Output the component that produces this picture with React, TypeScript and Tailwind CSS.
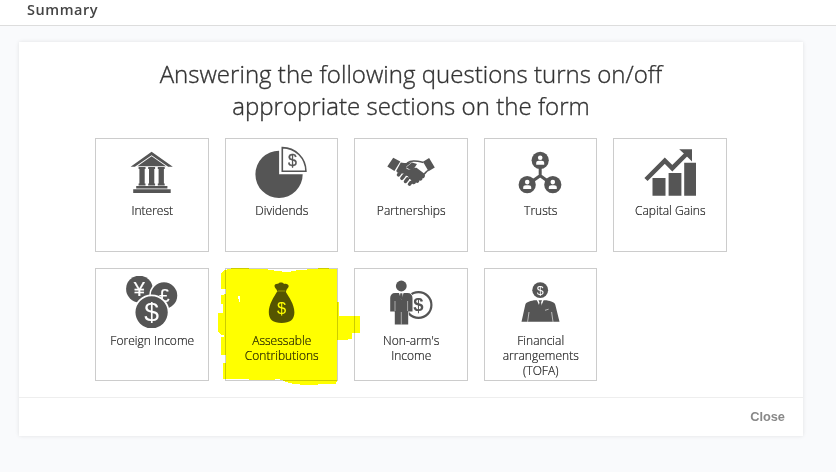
import type { ReactNode } from "react";

type Tile = {
  label: string;
  icon: ReactNode;
  highlighted?: boolean;
};

const Icon = ({ children }: { children: ReactNode }) => (
  <svg viewBox="0 0 52 52" className="block h-[52px] w-[52px] shrink-0" fill="#555555">
    {children}
  </svg>
);

const Symbol = ({ x, y, size, fill = "#fff", bold = false, children }: { x: number; y: number; size: number; fill?: string; bold?: boolean; children: ReactNode }) => (
  <text x={x} y={y} fontSize={size} fill={fill} textAnchor="middle" fontWeight={bold ? 700 : 400} fontFamily="Liberation Sans, sans-serif">
    {children}
  </text>
);

const BankIcon = () => (
  <Icon>
    <path d="M25.6 5.7 46.8 20.8h-4.6L25.6 9.2 8.9 20.8H4.6z" />
    <path d="M25.6 10.3 40 20.3H11.4z" />
    {[12.6, 22.2, 31.8].map((x) => (
      <path key={x} d={`M${x} 21h6.9v1.9h-.8v14.7h.8v1.9h-6.9v-1.9h.8V22.9h-.8z`} />
    ))}
    <path d="M10.2 40.1h31.2v2.3H10.2zM7.2 43.2h37.5v3.8H7.2z" />
  </Icon>
);

const PieIcon = () => (
  <Icon>
    <path d="M24.1 4.7A23.65 23.65 0 1 0 47.7 28.3H24.1z" />
    <path d="M27.3 1.6v23.600h23.600A23.600 23.600 0 0 0 27.3 1.6z" fill="#fff" stroke="#555555" strokeWidth="1.6" />
    <g stroke="#555555" strokeWidth=".3">
      <Symbol x={37.4} y={20} size={16} fill="#555555">$</Symbol>
    </g>
  </Icon>
);

const HandshakeIcon = () => (
  <Icon>
    <path d="M8.2 11.8 15.3 15.6 9.4 25 2.3 20.4zM38 15.8 44.1 12.1 49.8 21.4 43.5 25.3z" />
    <path d="M15.800 16.6c2.800.8 5.200.4 8.400-.2l3-.4-5.200 4c-1.500 1.500-.5 3.600 2 3.400 3-.2 5-2 7.500-1.700l7.300 5.600c1.200 1 1.600 2.400.8 3.700-.4 1-1.300 1.400-2.100 1.200.2 1.700-1.300 3-3.100 2.400-.1 1.900-1.700 2.900-3.500 2-.4 1.700-2.200 2.200-3.600 1.200l-1.500-1c1.300-2.200 0-4.100-2.200-3.900.3-2.200-1.300-3.600-3.300-3-.1-2-1.900-3.100-3.700-2.200-.8-1.500-2.600-2-4-.9l-1.400-1.800z" />
    <path d="M21 21.500 27 16.500l5 1.500-3 4.500-3 1.500z" />
    <path d="M22 17c4-2.700 8-2.500 16.500-.6M43 24.400c-1.500 1-2.400 2.300-4 3.800" fill="none" stroke="#555555" strokeWidth="1.5" />
    <g stroke="#555555" strokeWidth="3.500" strokeLinecap="round">
      <path d="m13.500 28.800 1.500-1.900M16.900 32.300l2.100-2.700M20.500 35.500l2-2.600M24.500 38.200l1.300-1.700" />
    </g>
  </Icon>
);

const TrustsIcon = () => (
  <Icon>
    <path d="M26.2 15v15M13.2 38.7l13-9 12.6 9" fill="none" stroke="#555555" strokeWidth="3" />
    {[[26.2, 14.3], [13.2, 38.7], [38.8, 38.7]].map(([x, y]) => (
      <g key={x} transform={`translate(${x} ${y})`}>
        <circle r="8.6" />
        <circle cy="-2.6" r="2.3" fill="#fff" />
        <path d="M-4 4.4V2.8c0-1.6 1-2.3 2.6-2.3h2.8C3 .5 4 1.2 4 2.8v1.6z" fill="#fff" />
      </g>
    ))}
  </Icon>
);

const GainsIcon = () => (
  <Icon>
    <path d="M8.5 32h13v17.7h-13zM24.6 27h12.8v22.7H24.6zM40.2 16.7H52v33H40.2z" />
    <path d="m2 33.5 18.8-18.8 7.5 7.5L43 7.5" fill="none" stroke="#555555" strokeWidth="4.5" />
    <path d="M35.2 3.2H48V15.5l-3-3-6.5-6.3z" />
  </Icon>
);

const CurrencyIcon = () => (
  <Icon>
    <circle cx="13.4" cy="13" r="13.3" />
    <g stroke="#fff" strokeWidth=".2">
      <Symbol x={13.4} y={20} size={20}>¥</Symbol>
    </g>
    <circle cx="38" cy="19.5" r="14" stroke="#fff" strokeWidth="1.5" />
    <g stroke="#fff" strokeWidth=".2">
      <Symbol x={38.3} y={26} size={19}>£</Symbol>
    </g>
    <circle cx="25.6" cy="36.3" r="17" stroke="#fff" strokeWidth="1.7" />
    <Symbol x={25.6} y={45.4} size={26.5}>$</Symbol>
  </Icon>
);

const MoneyBagIcon = () => (
  <Icon>
    <path d="M22 14.5c-.3-1.5-2.5-2.5-2.5-4.5 0-1.8 2-2.6 3.7-2.2.8-1.6 4.5-2 5.8.2 2-1 4.7.2 4.7 2 0 2-2 2.5-2.4 4.5l-.8 2.5h-7.5z" />
    <path d="M22 15.8h8.7c3 5 8.7 12.5 8.7 20.5 0 7.5-4.4 10.7-12.8 10.7s-12.8-3.2-12.8-10.7c0-8 5.2-15.5 8.2-20.5z" />
    <path d="M23 15h7.3" stroke="#fff" strokeWidth=".4" />
    <Symbol x={26.5} y={38.2} size={16.5}>$</Symbol>
  </Icon>
);

const PersonCoinIcon = () => (
  <Icon>
    <circle cx="33.5" cy="29" r="12.9" fill="none" stroke="#555555" strokeWidth="2.2" />
    <Symbol x={33.5} y={35.3} size={18.5} fill="#555555" bold>$</Symbol>
    <path d="M10 17h12.500c3.200 0 5 2 5 5v13.500h-4.300v13H9.800v-13H5.200V22c0-3 1.800-5 4.800-5z" stroke="#fff" strokeWidth="1.2" paintOrder="stroke" />
    <circle cx="16.3" cy="10" r="5.4" />
    <path d="m14 17 2.300 7 2.300-7z" fill="#fff" />
    <path d="m15.300 17.300-.5 4.500 1.500 2.200 1.500-2.200-.5-4.500z" />
    <path d="M10 25v10M22.600 25v10M16.300 36v12.500" stroke="#fff" strokeWidth=".5" />
  </Icon>
);

const ExecutiveIcon = () => (
  <Icon>
    <circle cx="26.2" cy="14.2" r="7.9" />
    <Symbol x={26.2} y={18.5} size={12.5}>$</Symbol>
    <path d="M20 24.200h12.500c5 1.200 8 1.800 8.800 4.500l4.200 17.100H7.500l3.800-17.100c.8-2.700 3.700-3.300 8.700-4.500z" />
    <path d="M22.800 24h6.900l-3.400 8z" fill="#fff" />
    <path d="M24.500 24.300h3.500l-.9 2.200.8 3.500-1.600 3-1.600-3 .8-3.500z" />
    <path d="m15 36-1.400 9.800M37.600 36l1.400 9.800M31 34.300l3.600-1.100" fill="none" stroke="#fff" strokeWidth=".6" />
  </Icon>
);

// Marker pen stroke that runs over the edges of its tile
const Highlight = () => (
  <svg viewBox="0 0 465 390" className="pointer-events-none absolute -left-[15.5px] -top-[8.5px] z-10 h-[130px] w-[155px] max-w-none mix-blend-multiply" fill="#ffff00" shapeRendering="crispEdges">
    <path fillRule="evenodd" d="M33 39 45 30 70 24 165 27 200 33 235 36 260 31 310 27 340 24 382 28V125H387V168H450V220H427V236L405 240H382V362L375 373H330L300 376 250 372 225 365 210 358 130 361 110 357H40V308L47 308V286L33 284V232H41V226L31 223 24 213V158H39V132H33V105L47 103V87H33ZM84 108V117H87V126H90V108Z" />
  </svg>
);

const tiles: Tile[] = [
  { label: "Interest", icon: <BankIcon /> },
  { label: "Dividends", icon: <PieIcon /> },
  { label: "Partnerships", icon: <HandshakeIcon /> },
  { label: "Trusts", icon: <TrustsIcon /> },
  { label: "Capital Gains", icon: <GainsIcon /> },
  { label: "Foreign Income", icon: <CurrencyIcon /> },
  { label: "Assessable Contributions", icon: <MoneyBagIcon />, highlighted: true },
  { label: "Non-arm's Income", icon: <PersonCoinIcon /> },
  { label: "Financial arrangements (TOFA)", icon: <ExecutiveIcon /> },
];

const App = () => {
  return (
    <div className="h-[472px] w-[836px] overflow-hidden bg-[#f9fafc] font-['Open_Sans',sans-serif] text-[#333333]">
      <header className="h-[26px] border-b border-[#dddddd] bg-white pl-[27px]">
        <h1 className="text-[14.5px] font-semibold leading-5 tracking-[0.55px] text-[#444444]">Summary</h1>
      </header>

      <main className="ml-[19px] mt-4 flex h-[394px] w-[784px] flex-col bg-white shadow-[0_0_4px_rgba(0,0,0,0.1)]">
        <div className="h-[355px] pt-4">
          <h2 className="text-center text-[24px] font-light leading-8 tracking-[0.03px] [-webkit-text-stroke:0.35px_#333333]">
            Answering the following questions turns on/off
            <br />
            appropriate sections on the form
          </h2>
          <div className="ml-[76px] mt-4 grid w-fit auto-rows-[113.5px] grid-cols-[repeat(5,113.5px)] gap-4">
            {tiles.map((tile) => (
              <button key={tile.label} className="relative flex flex-col items-center border border-[#cccccc] pt-[7px]">
                {tile.icon}
                <span className="ml-px mt-[5px] w-[90px] text-center text-[12px] font-light leading-[15px] tracking-[0.02px] text-[#222222] [-webkit-text-stroke:0.2px_#222222]">{tile.label}</span>
                {tile.highlighted && <Highlight />}
              </button>
            ))}
          </div>
        </div>
        <footer className="flex flex-1 items-center justify-end border-t border-[#eeeeee] pr-[18px]">
          <button className="font-['Liberation_Sans',Arial,sans-serif] text-[12.8px] font-bold text-[#888888]">Close</button>
        </footer>
      </main>
    </div>
  );
};

export default App;
